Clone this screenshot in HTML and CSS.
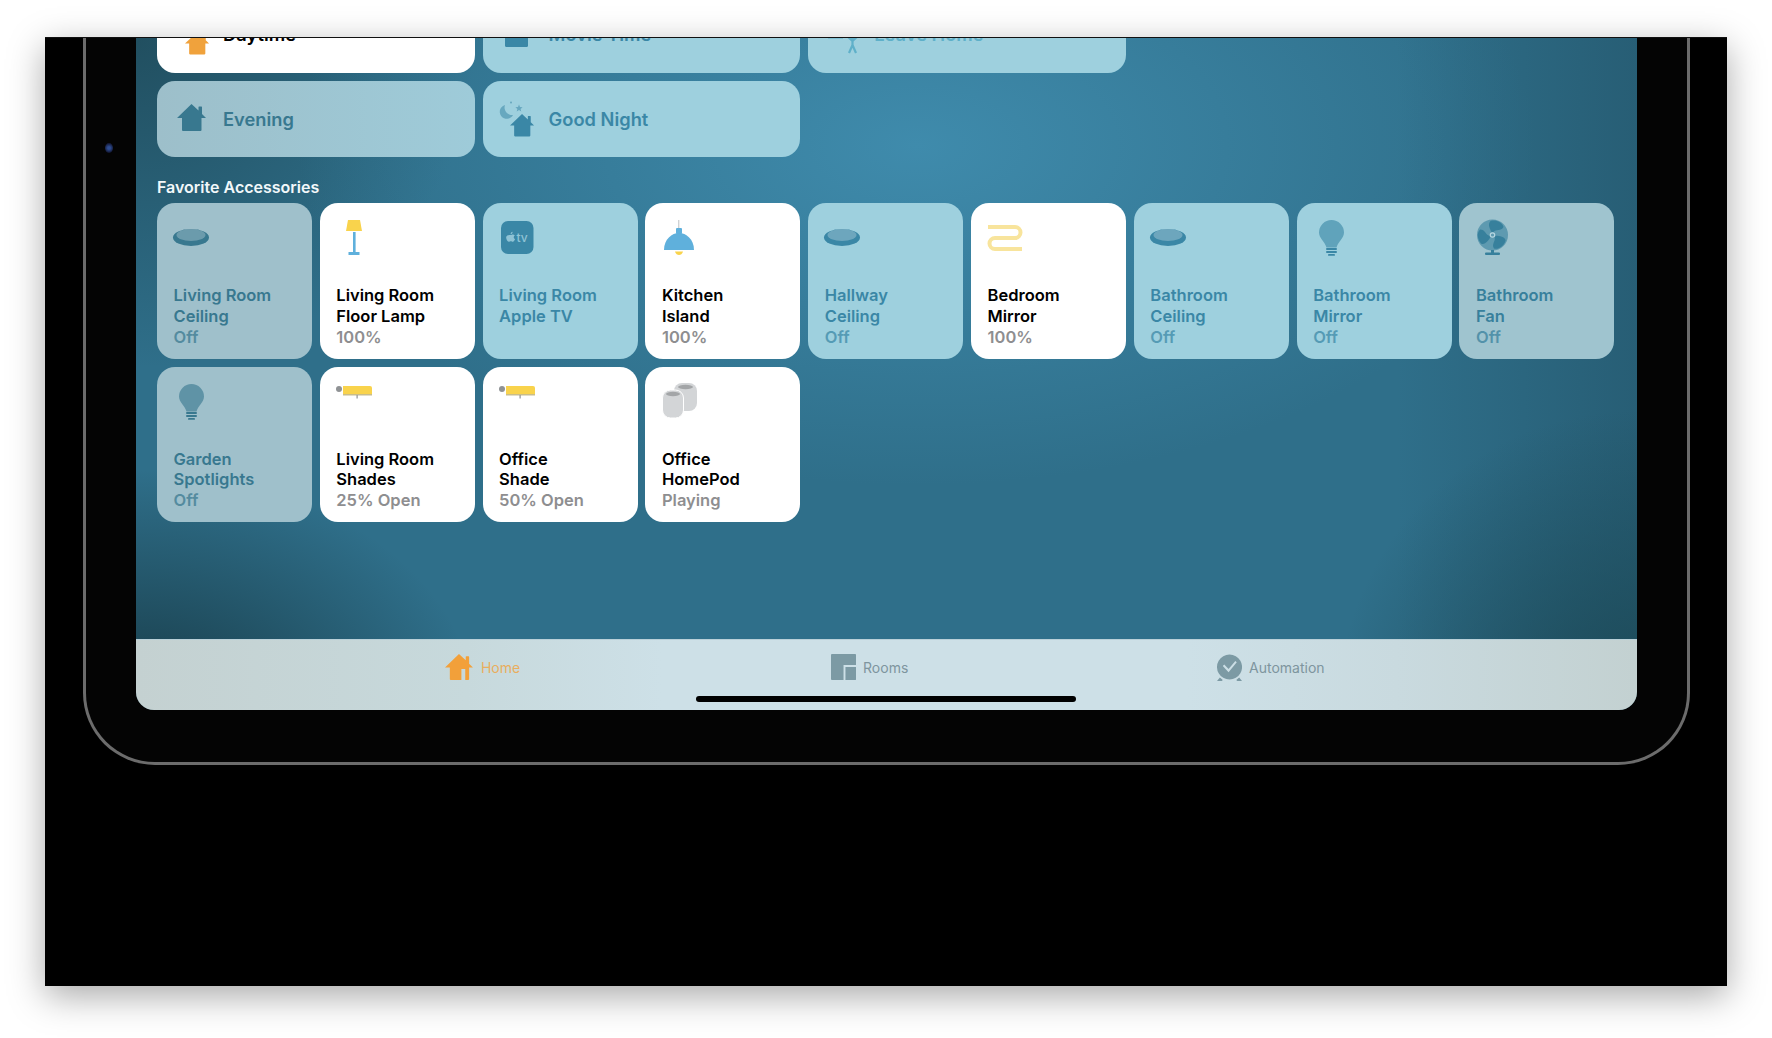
FILE: index.html
```html
<!DOCTYPE html>
<html>
<head>
    <title>Home</title>
    <meta charset="utf-8">
    <link rel="stylesheet" href="styles.css">
</head>
<body>
<svg class="defs" width="0" height="0">
    <defs>
        <path id="house" d="M14.5 0 L21.5 6.5 V3 a.6 .6 0 0 1 .6 -.6 H24.4 a.6 .6 0 0 1 .6 .6 V10 L29 14 H24.5 V26 a1 1 0 0 1 -1 1 H6 a1 1 0 0 1 -1 -1 V14 H0 Z"/>
        <g id="ceiling">
            <ellipse cx="20" cy="20.5" rx="18" ry="8.5"/>
            <ellipse class="sheen" cx="20" cy="18" rx="14.5" ry="6"/>
        </g>
        <g id="bulb">
            <path class="soft" d="M20.5 3 a12.5 12.5 0 0 1 12.5 12.5 c0 6 -6 9 -7.5 15 h-10 c-1.500 -6 -7.500 -9 -7.500 -15 a12.500 12.500 0 0 1 12.500 -12.500z"/>
            <rect x="15" y="31" width="11" height="2" rx="1"/>
            <rect x="15" y="34" width="11" height="2" rx="1"/>
            <rect x="17" y="37" width="7" height="1.800" rx=".9"/>
        </g>
        <g id="shade">
            <circle class="grey" cx="5" cy="8" r="3"/>
            <path class="yellow" d="M9 5 H36 a2 2 0 0 1 2 2 V13 H9 Z"/>
            <rect class="tan" x="9" y="13" width="29" height="1.500"/>
            <rect class="grey" x="22.500" y="14" width="1.200" height="3.500"/>
        </g>
    </defs>
</svg>

<div class="frame">
    <div class="bezel">
        <span class="camera"></span>
        <div class="screen">
            <div class="content">
                <div class="grid scenes">
                    <div class="tile scene on">
                        <svg class="scene-icon" viewBox="0 0 44 44"><use href="#house" class="orange" transform="translate(14 19) scale(.83)"/></svg>
                        <span>Daytime</span>
                    </div>
                    <div class="tile scene">
                        <svg class="scene-icon" viewBox="0 0 44 44"><rect x="8" y="18" width="23" height="16" rx="1.500" fill="currentColor"/></svg>
                        <span>Movie Time</span>
                    </div>
                    <div class="tile scene pale">
                        <svg class="scene-icon" viewBox="0 0 44 44">
                            <path d="M6 25 H21" stroke="currentColor" stroke-width="1.200" fill="none"/>
                            <path d="M24 22 L30.500 28 L37 22 M30.500 24 V33 M30.500 32 L27 40 M30.500 32 L34 40" stroke="currentColor" stroke-width="2.200" fill="none"/>
                        </svg>
                        <span>Leave Home</span>
                    </div>
                    <div class="tile scene left newrow">
                        <svg class="scene-icon" viewBox="0 0 44 44"><use href="#house" fill="currentColor" transform="translate(6 7)"/></svg>
                        <span>Evening</span>
                    </div>
                    <div class="tile scene">
                        <svg class="scene-icon" viewBox="0 0 44 44">
                            <path class="soft" d="M8 8 a7 7 0 1 0 8 10 a7.500 7.500 0 0 1 -8 -10z"/>
                            <path class="soft" d="M22 7.500 l1 2.500 2.600 .2 -2 1.700 .7 2.600 -2.300 -1.400 -2.300 1.400 .7 -2.600 -2 -1.700 2.600 -.2z"/>
                            <circle class="soft" cx="14" cy="5.500" r="1"/>
                            <use href="#house" fill="currentColor" transform="translate(13 17) scale(.83)"/>
                        </svg>
                        <span>Good Night</span>
                    </div>
                </div>

                <h2 class="heading">Favorite Accessories</h2>

                <div class="grid accessories">
                    <div class="tile left">
                        <svg class="icon" viewBox="0 0 44 44"><use href="#ceiling"/></svg>
                        <p class="name">Living Room<br>Ceiling</p>
                        <p class="state">Off</p>
                    </div>
                    <div class="tile on">
                        <svg class="icon" viewBox="0 0 44 44">
                            <path class="yellow" d="M14 3 H26 L28 14 H12 Z"/>
                            <rect class="blue" x="19" y="15" width="2.600" height="21"/>
                            <rect class="blue" x="14.500" y="35" width="11" height="3"/>
                        </svg>
                        <p class="name">Living Room<br>Floor Lamp</p>
                        <p class="state">100%</p>
                    </div>
                    <div class="tile">
                        <svg class="icon" viewBox="0 0 44 44">
                            <rect x="4" y="4" width="32.500" height="33" rx="7"/>
                            <path class="tv" d="M13.500 18 c1 0 1.500 -.6 2.400 -.6 c.8 0 1.500 .4 1.900 1 c-1.600 .9 -1.300 3.100 .3 3.700 c-.5 1.300 -1.300 2.600 -2.200 2.600 c-.9 0 -1.200 -.5 -2.100 -.5 c-.9 0 -1.200 .5 -2.100 .5 c-1.400 0 -2.800 -3 -2.500 -4.600 c.3 -1.500 1.800 -2.300 3.800 -2.100z M13.600 17.200 c0 -1.200 .9 -2.200 2 -2.400 c.1 1.300 -.8 2.300 -2 2.400z"/>
                            <text class="tv tv-text" x="19.500" y="25">tv</text>
                        </svg>
                        <p class="name">Living Room<br>Apple TV</p>
                    </div>
                    <div class="tile on">
                        <svg class="icon" viewBox="0 0 44 44">
                            <rect class="grey-light" x="19" y="3" width="1.400" height="8"/>
                            <rect class="blue" x="17" y="11" width="6" height="6" rx="1"/>
                            <path class="blue" d="M5 33 C5 22 13 16 20 16 C27 16 35 22 35 33 Z"/>
                            <path class="yellow" d="M16 34.500 H24 C23.500 37 21.500 38 20 38 C18.500 38 16.500 37 16 34.500 Z"/>
                        </svg>
                        <p class="name">Kitchen<br>Island</p>
                        <p class="state">100%</p>
                    </div>
                    <div class="tile">
                        <svg class="icon" viewBox="0 0 44 44"><use href="#ceiling"/></svg>
                        <p class="name">Hallway<br>Ceiling</p>
                        <p class="state">Off</p>
                    </div>
                    <div class="tile on">
                        <svg class="icon" viewBox="0 0 44 44">
                            <path class="strip" d="M3 10 H30 a5.500 5.500 0 0 1 0 11 H10 a5.500 5.500 0 0 0 0 11 H37"/>
                        </svg>
                        <p class="name">Bedroom<br>Mirror</p>
                        <p class="state">100%</p>
                    </div>
                    <div class="tile">
                        <svg class="icon" viewBox="0 0 44 44"><use href="#ceiling"/></svg>
                        <p class="name">Bathroom<br>Ceiling</p>
                        <p class="state">Off</p>
                    </div>
                    <div class="tile">
                        <svg class="icon" viewBox="0 0 44 44"><use href="#bulb"/></svg>
                        <p class="name">Bathroom<br>Mirror</p>
                        <p class="state">Off</p>
                    </div>
                    <div class="tile right">
                        <svg class="icon" viewBox="0 0 44 44">
                            <circle class="soft" cx="19.500" cy="18" r="15.500"/>
                            <path d="M18.500 15 C16.500 11 14.500 7 17.500 4 C22.500 2.500 29.500 5 30.500 10 C28 14.500 23 12 20.500 15Z"/>
                            <path transform="rotate(120 19.500 18)" d="M18.500 15 C16.500 11 14.500 7 17.500 4 C22.500 2.500 29.500 5 30.500 10 C28 14.500 23 12 20.500 15Z"/>
                            <path transform="rotate(240 19.500 18)" d="M18.500 15 C16.500 11 14.500 7 17.500 4 C22.500 2.500 29.500 5 30.500 10 C28 14.500 23 12 20.500 15Z"/>
                            <circle class="hub" cx="19.500" cy="18" r="2.200"/>
                            <rect x="18" y="33" width="3" height="3"/>
                            <rect x="12" y="35.500" width="15" height="2.500" rx="1"/>
                        </svg>
                        <p class="name">Bathroom<br>Fan</p>
                        <p class="state">Off</p>
                    </div>
                    <div class="tile left">
                        <svg class="icon" viewBox="0 0 44 44"><use href="#bulb"/></svg>
                        <p class="name">Garden<br>Spotlights</p>
                        <p class="state">Off</p>
                    </div>
                    <div class="tile on">
                        <svg class="icon" viewBox="0 0 44 44"><use href="#shade"/></svg>
                        <p class="name">Living Room<br>Shades</p>
                        <p class="state">25% Open</p>
                    </div>
                    <div class="tile on">
                        <svg class="icon" viewBox="0 0 44 44"><use href="#shade"/></svg>
                        <p class="name">Office<br>Shade</p>
                        <p class="state">50% Open</p>
                    </div>
                    <div class="tile on">
                        <svg class="icon" viewBox="0 0 44 44">
                            <rect class="pod" x="15" y="2" width="23" height="28" rx="8"/>
                            <ellipse class="pod-top" cx="26.500" cy="6" rx="7.500" ry="2.200"/>
                            <rect class="pod pod-front" x="3.500" y="9" width="21" height="28" rx="8"/>
                            <ellipse class="pod-top" cx="14" cy="13" rx="7" ry="2.200"/>
                        </svg>
                        <p class="name">Office<br>HomePod</p>
                        <p class="state">Playing</p>
                    </div>
                </div>
            </div>

            <div class="tabbar">
                <div class="tab active">
                    <svg class="tab-icon" viewBox="0 0 30 28">
                        <path fill-rule="evenodd" d="M14.500 0 L21.500 6.500 V3 a.6 .6 0 0 1 .6 -.6 H24.400 a.6 .6 0 0 1 .6 .6 V10 L29 14 H25 V26 a1 1 0 0 1 -1 1 H6 a1 1 0 0 1 -1 -1 V14 H0 Z M17 15.500 V27 H21 V15.500 Z"/>
                    </svg>
                    <span>Home</span>
                </div>
                <div class="tab">
                    <svg class="tab-icon" viewBox="0 0 26 28">
                        <path d="M1 0 H25 a1 1 0 0 1 1 1 V11.500 H13 V27 H1 a1 1 0 0 1 -1 -1 V1 a1 1 0 0 1 1 -1z"/>
                        <path d="M15 13.500 H26 V26 a1 1 0 0 1 -1 1 H15 Z"/>
                    </svg>
                    <span>Rooms</span>
                </div>
                <div class="tab">
                    <svg class="tab-icon" viewBox="0 0 26 28">
                        <path fill-rule="evenodd" d="M13 .5 a13 13 0 1 1 -.01 0z M7.500 11 L6 12.500 L12 19 L20.500 8.500 L19 7.200 L12 15.500z"/>
                        <path d="M0 28 L3 24.500 L6 27 L5 28z M26 28 L23 24.500 L20 27 L21 28z"/>
                    </svg>
                    <span>Automation</span>
                </div>
            </div>
            <span class="home-bar"></span>
        </div>
    </div>
</div>
</body>
</html>
```

FILE: styles.css
```css
*{ margin:0; padding:0; box-sizing:border-box; }
html,body{ height:100%; background:#fff; overflow:hidden; }
body{ padding:37px 45px 52px 45px; font-family:Inter,"Liberation Sans",sans-serif; }
.defs{ position:absolute; }

.frame{ height:949px; background:#000; overflow:hidden; box-shadow:0 10px 34px rgba(0,0,0,.34); border-top:1px solid #111; }
.bezel{ position:relative; height:727px; margin:0 37px 0 38px; padding:0 50.500px 54px 49.500px; background:#040404; border:solid #6c6c6c; border-width:0 3px 3px; border-radius:0 0 72px 72px; }
.camera{ position:absolute; left:19px; top:105px; width:8px; height:10px; border-radius:50%; background:radial-gradient(circle,#2d4c92 20%,#141a38 70%); }

.screen{ position:relative; height:672px; display:flex; flex-direction:column; overflow:hidden; border-radius:0 0 18px 18px;
    background:
        radial-gradient(ellipse 340px 240px at 0% 100%,#173a46 0%,rgba(23,58,70,0) 100%),
        radial-gradient(ellipse 300px 300px at 100% 100%,#1c4957 0%,rgba(28,73,87,0) 100%),
        linear-gradient(270deg,rgba(33,80,100,.55) 0%,rgba(33,80,100,0) 16%),
        radial-gradient(ellipse 620px 340px at 52% 16%,#3f8bac 0%,rgba(63,139,172,0) 100%),
        radial-gradient(ellipse 340px 330px at 0% 0%,#214f60 0%,rgba(33,79,96,0) 100%),
        #2f6f8a; }

.content{ flex:1; margin-top:-41.500px; padding:0 22px 0 21.500px; }
.grid{ display:grid; grid-template-columns:repeat(9,1fr); column-gap:7.800px; }
.scenes{ row-gap:8.500px; }
.accessories{ row-gap:8px; }

.heading{ margin:19.500px 0 6.500px; font-size:16px; line-height:20px; font-weight:600; color:#f2f8fa; }

.tile{ display:flex; flex-direction:column; height:155.500px; padding:14px 10px 11px 16.500px; border-radius:18px; background:#9ed0de; color:#3a87a6; font-size:16.500px; line-height:20.800px; font-weight:600; }
.tile.left{ background:#9fc0cb; color:#38788f; }
.tile.right{ background:#9fc4cf; color:#37809c; }
.tile.on{ background:#fff; color:#000; fill:#000; }
.tile .state{ opacity:.72; }
.tile.on .state{ color:#8e8e90; opacity:1; }

.icon{ width:44px; height:44px; margin-left:-2.500px; fill:currentColor; flex:none; }
.name{ margin-top:auto; }
.tile .name:last-child{ padding-bottom:20.800px; }

.scene{ grid-column:span 2; flex-direction:row; align-items:center; gap:8px; height:76px; padding:0 14px; font-size:18.300px; }
.scene.newrow{ grid-column:1 / span 2; background:linear-gradient(90deg,#9dbfca,#9ecbd9); }
.scene.pale{ color:#5fb0c9; }
.scene-icon{ width:44px; height:44px; flex:none; }

.soft{ opacity:.62; fill:currentColor; }
.sheen{ fill:#fff; opacity:.26; }
.hub{ fill:none; stroke:#b6d6e0; stroke-width:1.200; }
.scene-icon .soft{ opacity:.55; }
.orange{ fill:#f0a23c; }
.yellow{ fill:#f9d34c; }
.blue{ fill:#5fb0dc; }
.grey{ fill:#8f9294; }
.grey-light{ fill:#cfd2d4; }
.tan{ fill:#c9bd8a; }
.strip{ fill:none; stroke:#f8e49c; stroke-width:4; }
.pod{ fill:#d3d5d7; }
.pod-front{ stroke:#fff; stroke-width:1; }
.pod-top{ fill:#a3a5a7; }
.tv{ fill:#8fc3d5; }
.tv-text{ font-size:12px; font-weight:500; }

.tabbar{ display:grid; grid-template-columns:repeat(3,386px); align-items:center; height:71px; padding:0 0 15px 309.500px; border-top:1px solid #b9d0d8;
    background:linear-gradient(90deg,#c4d1d1 0%,#c7d9dc 22%,#cde0e7 35%,#cde0e7 70%,#c9dadf 84%,#c3d1d1 100%); }
.tab{ display:flex; align-items:center; gap:7px; font-size:14px; color:#7e959e; fill:#7c9aa4; }
.tab.active{ color:#e9ae5e; fill:#f2a03a; }
.tab-icon{ height:27px; width:auto; flex:none; }
.home-bar{ position:absolute; left:560.500px; bottom:8px; width:380px; height:6.500px; border-radius:4px; background:#000; }
```
